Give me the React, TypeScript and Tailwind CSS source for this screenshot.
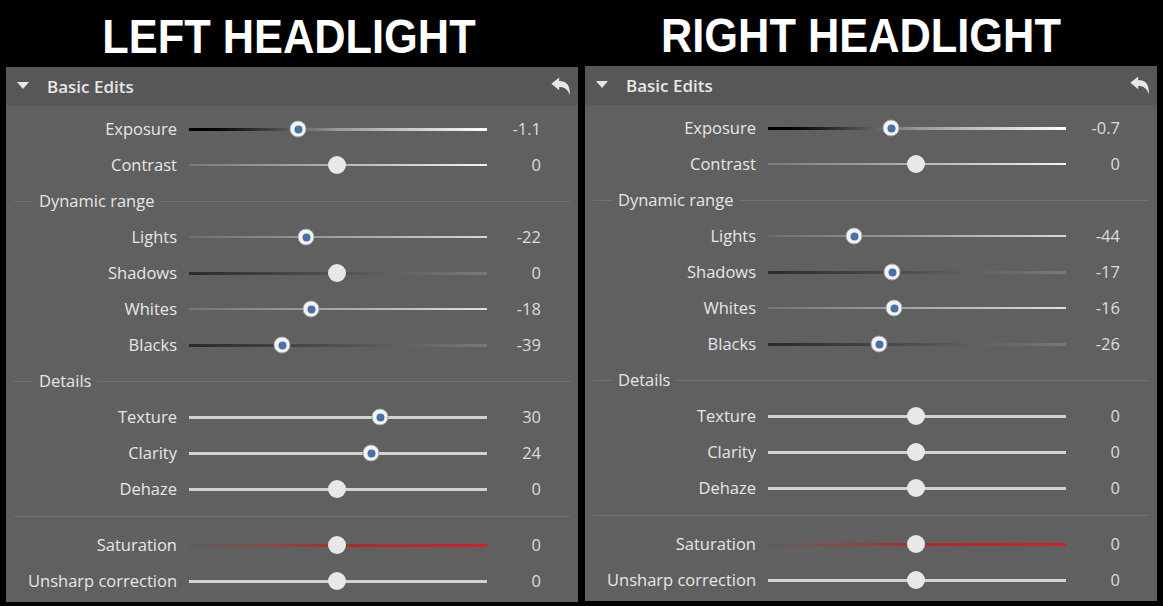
import React from "react";

type Kind = "exposure" | "contrast" | "lights" | "shadows" | "whites" | "blacks" | "plain" | "sat";

type Row =
  | { type: "slider"; label: string; value: string; pos: number; kind: Kind }
  | { type: "section"; label: string }
  | { type: "divider" };

const trackClass: Record<Kind, string> = {
  exposure: "h-[3px] bg-linear-to-r from-black via-[#9a9a9a] to-white",
  contrast: "h-[2px] bg-linear-to-r from-[#7a7a7a] to-[#f2f2f2]",
  lights: "h-[2px] bg-linear-to-r from-[#6e6e6e] to-[#d8d8d8]",
  shadows: "h-[3px] bg-linear-to-r from-[#2c2c2c] to-[#7a7a7a]",
  whites: "h-[2px] bg-linear-to-r from-[#747474] to-[#e0e0e0]",
  blacks: "h-[3px] bg-linear-to-r from-[#2a2a2a] to-[#787878]",
  plain: "h-[3px] bg-[#d2d2d2]",
  sat: "h-[3px] bg-linear-to-r from-[#5c5c5c] via-[#a82a2c] to-[#d2202a]",
};

function rows(p: {
  exposure: [string, number];
  lights: [string, number];
  shadows: [string, number];
  whites: [string, number];
  blacks: [string, number];
  texture: [string, number];
  clarity: [string, number];
}): Row[] {
  return [
    { type: "slider", label: "Exposure", value: p.exposure[0], pos: p.exposure[1], kind: "exposure" },
    { type: "slider", label: "Contrast", value: "0", pos: 148, kind: "contrast" },
    { type: "section", label: "Dynamic range" },
    { type: "slider", label: "Lights", value: p.lights[0], pos: p.lights[1], kind: "lights" },
    { type: "slider", label: "Shadows", value: p.shadows[0], pos: p.shadows[1], kind: "shadows" },
    { type: "slider", label: "Whites", value: p.whites[0], pos: p.whites[1], kind: "whites" },
    { type: "slider", label: "Blacks", value: p.blacks[0], pos: p.blacks[1], kind: "blacks" },
    { type: "section", label: "Details" },
    { type: "slider", label: "Texture", value: p.texture[0], pos: p.texture[1], kind: "plain" },
    { type: "slider", label: "Clarity", value: p.clarity[0], pos: p.clarity[1], kind: "plain" },
    { type: "slider", label: "Dehaze", value: "0", pos: 148, kind: "plain" },
    { type: "divider" },
    { type: "slider", label: "Saturation", value: "0", pos: 148, kind: "sat" },
    { type: "slider", label: "Unsharp correction", value: "0", pos: 148, kind: "plain" },
  ];
}

const leftRows = rows({
  exposure: ["-1.1", 109],
  lights: ["-22", 117],
  shadows: ["0", 148],
  whites: ["-18", 122],
  blacks: ["-39", 93],
  texture: ["30", 191],
  clarity: ["24", 182],
});

const rightRows = rows({
  exposure: ["-0.7", 123],
  lights: ["-44", 86],
  shadows: ["-17", 124],
  whites: ["-16", 126],
  blacks: ["-26", 111],
  texture: ["0", 148],
  clarity: ["0", 148],
});

function Thumb({ pos, active }: { pos: number; active: boolean }) {
  return (
    <div
      className="absolute top-1/2 -translate-x-1/2 -translate-y-1/2"
      style={{ left: pos }}
    >
      {active ? (
        <div className="w-[17px] h-[17px] rounded-full bg-[#f4f4f4] border border-[#9aa4b0] flex items-center justify-center">
          <div className="w-[8px] h-[8px] rounded-full bg-[#4a70a6]" />
        </div>
      ) : (
        <div className="w-[18px] h-[18px] rounded-full bg-[#e8e8e8]" />
      )}
    </div>
  );
}

function Slider({ row }: { row: Extract<Row, { type: "slider" }> }) {
  return (
    <div className="flex items-center h-[36px]">
      <div className="w-[171px] text-right">{row.label}</div>
      <div className="relative ml-[12px] w-[298px] h-[18px] flex items-center">
        <div className={"w-full " + trackClass[row.kind]} />
        <Thumb pos={row.pos} active={row.value !== "0"} />
      </div>
      <div className="w-[54px] text-right text-[#dcdcdc]">{row.value}</div>
    </div>
  );
}

function UndoIcon() {
  return (
    <svg width="22" height="22" viewBox="0 0 24 24" fill="#e6e6e6">
      <path d="M1.5 8.5 L10 1.5 L10 5.5 C17.5 5.5 22.5 10 21.5 21 C19.5 14.5 16 12 10 12 L10 15.5 Z" />
    </svg>
  );
}

function Panel({ title, titleShift, titleHeight, data }: { title: string; titleShift: string; titleHeight: string; data: Row[] }) {
  return (
    <div className="w-[572px] flex flex-col">
      <div className={"flex items-end justify-center pb-[6px] " + titleHeight}>
        <h1
          className={"text-white font-bold text-[49px] leading-none whitespace-nowrap scale-x-[0.885] " + titleShift}
          style={{ fontFamily: '"Liberation Sans", Arial, sans-serif' }}
        >
          {title}
        </h1>
      </div>
      <div
        className="bg-[#606060] text-[#e6e6e6] text-[16.5px]"
        style={{ fontFamily: '"Open Sans", "Noto Sans", sans-serif' }}
      >
        <div className="h-[39px] bg-[#575757] flex items-center pl-[11px] pr-[6px]">
          <svg width="12" height="8" viewBox="0 0 12 8" className="mt-[-2px]">
            <path d="M0 0 H12 L6 7 Z" fill="#e6e6e6" />
          </svg>
          <span className="ml-[18px] font-semibold text-[17px] text-[#e8e8e8] flex-1">Basic Edits</span>
          <UndoIcon />
        </div>
        <div className="pt-[5px] pb-[3px]">
          {data.map((row, i) => {
            if (row.type === "slider") return <Slider key={i} row={row} />;
            if (row.type === "section")
              return (
                <div key={i} className="flex items-center h-[36px] pl-[8px] pr-[8px]">
                  <div className="w-[19px] h-px bg-[#727272]" />
                  <span className="px-[6px]">{row.label}</span>
                  <div className="flex-1 h-px bg-[#727272]" />
                </div>
              );
            return (
              <div key={i} className="pt-[9px] pb-[10px] px-[8px]">
                <div className="h-px bg-[#727272]" />
              </div>
            );
          })}
        </div>
      </div>
    </div>
  );
}

export default function App() {
  return (
    <div className="w-[1163px] h-[606px] bg-black flex gap-[7px] px-[6px] overflow-hidden">
      <Panel title="LEFT HEADLIGHT" titleShift="-translate-x-[3px]" titleHeight="h-[67px]" data={leftRows} />
      <Panel title="RIGHT HEADLIGHT" titleShift="-translate-x-[10px]" titleHeight="h-[66px]" data={rightRows} />
    </div>
  );
}
